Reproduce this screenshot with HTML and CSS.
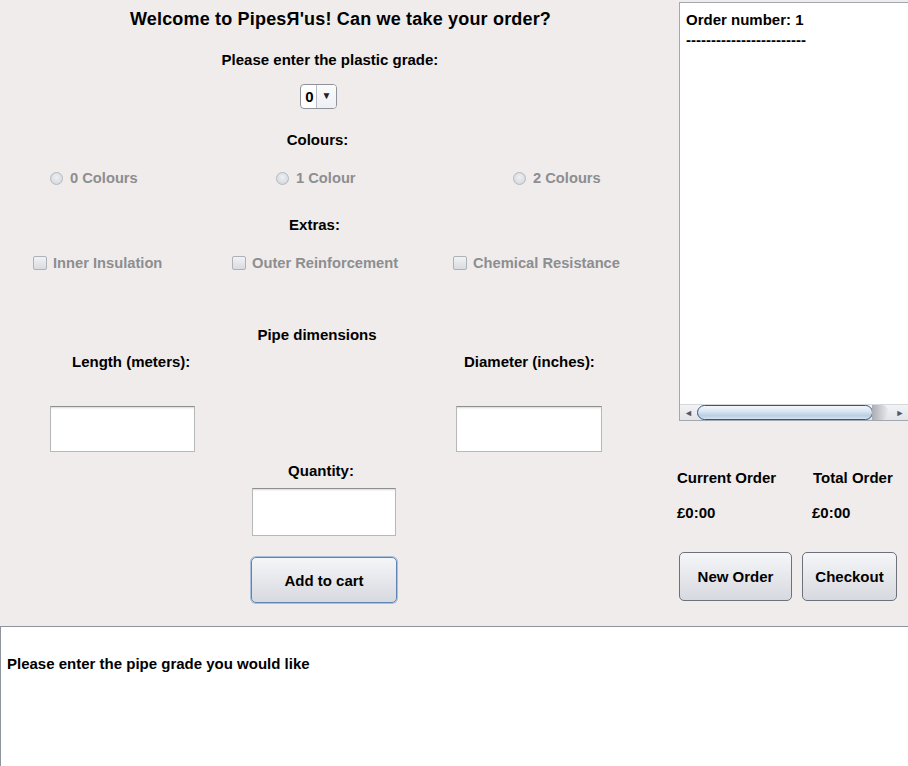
FILE: index.html
```html
<!DOCTYPE html>
<html lang="en">
<head>
<meta charset="utf-8">
<title>PipesЯ'us</title>
<link rel="stylesheet" href="styles.css">
</head>
<body>
<div class="app">
  <div class="top">
    <main class="form">
      <div class="row title">Welcome to PipesЯ'us! Can we take your order?</div>
      <div class="row label grade-label">Please enter the plastic grade:</div>
      <div class="row combo-row">
        <div class="combo"><span class="combo-val">0</span><span class="combo-btn">▼</span></div>
      </div>
      <div class="row label colours-label">Colours:</div>
      <div class="row radios">
        <label class="opt r1"><span class="radio"></span>0 Colours</label>
        <label class="opt r2"><span class="radio"></span>1 Colour</label>
        <label class="opt"><span class="radio"></span>2 Colours</label>
      </div>
      <div class="row label extras-label">Extras:</div>
      <div class="row checks">
        <label class="opt c1"><span class="check"></span>Inner Insulation</label>
        <label class="opt c2"><span class="check"></span>Outer Reinforcement</label>
        <label class="opt"><span class="check"></span>Chemical Resistance</label>
      </div>
      <div class="row label pipe-label">Pipe dimensions</div>
      <div class="row dim-labels">
        <span class="dim-len">Length (meters):</span>
        <span>Diameter (inches):</span>
      </div>
      <div class="row dim-fields">
        <div class="field f-len"></div>
        <div class="field f-dia"></div>
      </div>
      <div class="row label qty-label">Quantity:</div>
      <div class="row qty-row"><div class="field f-qty"></div></div>
      <div class="row add-row"><button class="btn btn-focus add-btn">Add to cart</button></div>
    </main>
    <aside class="side">
      <div class="order-box">
        <div class="order-text">
          <div class="line">Order number: 1</div>
          <div class="line">------------------------</div>
        </div>
        <div class="hscroll">
          <span class="arrow left">◄</span>
          <span class="thumb"></span>
          <span class="track-shadow"></span>
          <span class="arrow right">►</span>
        </div>
      </div>
      <div class="totals head">
        <span class="col1">Current Order</span>
        <span>Total Order</span>
      </div>
      <div class="totals amounts">
        <span class="col1">£0:00</span>
        <span>£0:00</span>
      </div>
      <div class="side-buttons">
        <button class="btn new-btn">New Order</button>
        <button class="btn checkout-btn">Checkout</button>
      </div>
    </aside>
  </div>
  <div class="console">Please enter the pipe grade you would like</div>
</div>
</body>
</html>
```

FILE: styles.css
```css
* { box-sizing: border-box; }
html, body {
  margin: 0;
  padding: 0;
  background: #efeceb;
}
body {
  width: 908px;
  height: 766px;
  overflow: hidden;
  font-family: "Liberation Sans", Arial, sans-serif;
  font-weight: bold;
  font-size: 15px;
  color: #000;
}
.app {
  display: grid;
  grid-template-rows: 626px 140px;
  height: 766px;
}
.top {
  display: grid;
  grid-template-columns: 677px 231px;
}
.form {
  display: flex;
  flex-direction: column;
}
.row { flex: none; }
.title {
  height: 38px;
  line-height: 38px;
  font-size: 18px;
  letter-spacing: 0.18px;
  text-align: center;
  padding-left: 4px;
}
.label {
  height: 24px;
  line-height: 24px;
  text-align: center;
}
.grade-label { margin-top: 10px; padding-right: 17px; }
.combo-row { margin-top: 12px; height: 25px; padding-left: 300px; }
.combo {
  width: 37px;
  height: 25px;
  border: 1px solid #8d929b;
  border-radius: 4px;
  background: #fff;
  display: flex;
  align-items: stretch;
}
.combo-val {
  width: 16px;
  text-align: center;
  line-height: 23px;
  padding-left: 2px;
  border-right: 1px solid #b9bcc2;
}
.combo-btn {
  flex: 1;
  font-size: 10px;
  line-height: 22px;
  text-align: center;
  color: #222;
  background: linear-gradient(#fbfbfc, #eef0f3);
  border-radius: 0 3px 3px 0;
}
.colours-label { margin-top: 19px; padding-right: 42px; }
.radios, .checks {
  height: 20px;
  display: flex;
  align-items: center;
  color: #8d8e90;
  font-size: 14.7px;
}
.radios { margin-top: 16px; padding-left: 50px; }
.checks { margin-top: 16px; padding-left: 33px; }
.opt { display: flex; align-items: center; }
.r1 { width: 226px; }
.r2 { width: 237px; }
.c1 { width: 199px; }
.c2 { width: 221px; }
.radio {
  width: 13px;
  height: 13px;
  border-radius: 50%;
  border: 1px solid #b4b8bf;
  background: radial-gradient(circle at 50% 40%, #eef0f2 0%, #dde0e4 55%, #cdd1d6 100%);
  margin-right: 7px;
}
.check {
  width: 14px;
  height: 14px;
  border-radius: 2px;
  border: 1px solid #adb1b8;
  background: linear-gradient(#f1f2f4, #d8dbe0);
  margin-right: 6px;
}
.extras-label { margin-top: 25px; padding-right: 48px; }
.pipe-label { margin-top: 50px; padding-right: 43px; }
.dim-labels {
  margin-top: 3px;
  height: 24px;
  line-height: 24px;
  display: flex;
  padding-left: 72px;
}
.dim-len { width: 392px; }
.dim-fields {
  margin-top: 32px;
  height: 46px;
  display: flex;
  padding-left: 50px;
}
.field {
  background: #fff;
  border: 1px solid #b8b8b8;
  border-top-color: #8f8f8f;
  box-shadow: inset 0 2px 2px -1px #d8d8d8;
}
.f-len { width: 145px; height: 46px; margin-right: 261px; }
.f-dia { width: 146px; height: 46px; }
.qty-label { margin-top: 7px; padding-right: 35px; }
.qty-row { margin-top: 5px; height: 48px; padding-left: 252px; }
.f-qty { width: 144px; height: 48px; }
.add-row { margin-top: 21px; height: 46px; padding-left: 251px; }
.btn {
  font-family: "Liberation Sans", Arial, sans-serif;
  font-weight: bold;
  font-size: 15px;
  color: #000;
  border: 1px solid #6d717c;
  border-radius: 5px;
  background: linear-gradient(#f5f6f8 0%, #e8e9ed 45%, #d6d9df 100%);
  padding: 0;
  cursor: default;
}
.btn-focus {
  border-color: #5f85b4;
  box-shadow: 0 0 0 1px #a9c0dc;
}
.add-btn { width: 146px; height: 46px; }

.side {
  display: flex;
  flex-direction: column;
}
.order-box {
  margin-top: 2px;
  margin-left: 2px;
  height: 419px;
  background: #fff;
  border: 1px solid #a3a7b0;
  border-right: none;
  display: flex;
  flex-direction: column;
}
.order-text {
  flex: 1;
  padding: 7px 0 0 6px;
}
.line { height: 20px; line-height: 20px; }
.hscroll {
  height: 16px;
  border-top: 1px solid #d4d7dc;
  background: linear-gradient(#f2f3f5, #e2e4e8);
  display: flex;
  align-items: center;
}
.arrow {
  font-size: 9px;
  color: #555a62;
  width: 17px;
  text-align: center;
}
.thumb {
  width: 176px;
  height: 15px;
  border: 1px solid #3a5676;
  border-radius: 8px;
  background: linear-gradient(#f3f7fb 0%, #d9e6f2 40%, #b9cfe4 75%, #d5e3f0 100%);
}
.track-shadow {
  width: 16px;
  height: 15px;
  background: linear-gradient(to right, #a9acb2, #e8e9ec);
  border-radius: 0 6px 6px 0;
  margin-left: -1px;
}
.arrow.right { margin-left: auto; width: 16px; }
.totals {
  height: 24px;
  line-height: 24px;
  display: flex;
}
.totals .col1 { width: 135px; }
.head { margin-top: 45px; }
.head .col1 { width: 136px; }
.amounts { margin-top: 11px; }
.side-buttons {
  margin-top: 27px;
  margin-left: 2px;
  display: flex;
  gap: 10px;
}
.new-btn { width: 113px; height: 49px; }
.checkout-btn { width: 95px; height: 49px; }
.console {
  background: #fff;
  border-top: 1px solid #8f939c;
  border-left: 1px solid #8f939c;
  padding: 28px 0 0 6px;
  line-height: 18px;
}
```
